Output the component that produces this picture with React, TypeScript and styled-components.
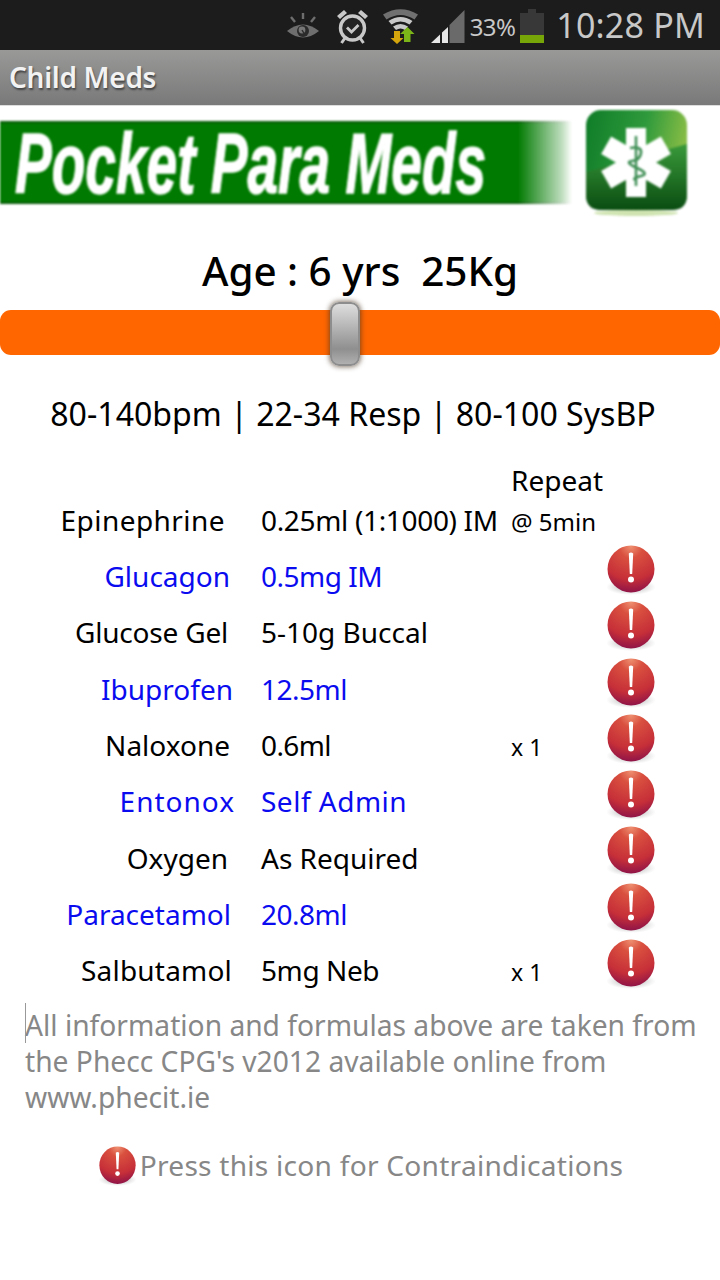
import React, { FC } from "react";
import styled, { createGlobalStyle } from "styled-components";

const GlobalStyle = createGlobalStyle`
  html, body {
    margin: 0;
    padding: 0;
    background: #fff;
  }
  body {
    font-family: "Noto Sans", "Open Sans", sans-serif;
  }
`;

const Screen = styled.div`
  width: 720px;
  height: 1280px;
  overflow: hidden;
  background: #fff;
  color: #000;
`;

const StatusBar = styled.div`
  height: 50px;
  background: #1c1c1c;
  display: flex;
  align-items: center;
  justify-content: flex-end;
  padding-right: 15px;
`;

const StatusIcon = styled.svg<{ $gap?: number }>`
  display: block;
  margin-top: 2px;
  margin-right: ${({ $gap }) => $gap ?? 0}px;
`;

const BatteryText = styled.span`
  font-size: 24px;
  color: #c8c8c8;
  letter-spacing: -0.6px;
  margin-top: 3px;
  margin-right: 5px;
`;

const Clock = styled.span`
  font-size: 34px;
  color: #c8c8c8;
  margin-left: 12px;
  letter-spacing: 0.2px;
`;

const TitleBar = styled.div`
  height: 56px;
  display: flex;
  align-items: center;
  padding: 0 0 2px 9px;
  background: linear-gradient(#999998, #797979);
  border-bottom: 1px solid #ddd;
  box-sizing: border-box;
`;

const Title = styled.h1`
  margin: 0;
  font-size: 28px;
  font-weight: 600;
  letter-spacing: -0.3px;
  color: #f2f2f2;
  text-shadow: 1px 2px 2px #444;
`;

const Banner = styled.div`
  height: 111px;
  display: flex;
  align-items: flex-start;
  filter: blur(0.8px);
`;

const BannerBar = styled.div`
  width: 572px;
  height: 83px;
  margin-top: 15px;
  display: flex;
  align-items: center;
  background: #007a00;
  border-top: 2px solid #0b5c0b;
  border-bottom: 2px solid #0b5c0b;
  box-sizing: border-box;
  mask-image: linear-gradient(90deg, #000 518px, rgba(0, 0, 0, 0.25) 562px, transparent 572px);
`;

const BannerText = styled.span`
  display: inline-block;
  font-family: "Liberation Sans", Arial, sans-serif;
  font-weight: 700;
  font-style: italic;
  font-size: 86px;
  line-height: 1;
  color: #fff;
  -webkit-text-stroke: 1.5px #fff;
  white-space: nowrap;
  margin-left: 15px;
  transform: scaleX(0.64);
  transform-origin: left center;
`;

const BannerLogo = styled.svg`
  display: block;
  margin-left: 14px;
  margin-top: 4px;
`;

const AgeHeading = styled.div`
  height: 93px;
  display: flex;
  align-items: center;
  justify-content: center;
  font-size: 40.4px;
  font-weight: 500;
  white-space: pre;
  padding-top: 13px;
  box-sizing: border-box;
`;

const SliderTrack = styled.div`
  position: relative;
  height: 45px;
  border-radius: 11px;
  background: #ff6600;
`;

const SliderThumb = styled.div<{ $left: number }>`
  position: absolute;
  left: ${({ $left }) => $left}px;
  top: -8px;
  width: 30px;
  height: 64px;
  box-sizing: border-box;
  border-radius: 9px;
  border: 2px solid #8d8d8d;
  background: linear-gradient(#dedede, #a9a9a9 50%, #8f8f8f 75%, #b0b0b0);
  box-shadow: 0 0 5px 1px rgba(70, 50, 30, 0.65);
`;

const Vitals = styled.div`
  height: 105px;
  display: flex;
  align-items: center;
  justify-content: center;
  font-size: 32.1px;
  white-space: nowrap;
  padding: 11px 14px 0 0;
  box-sizing: border-box;
`;

const MedTable = styled.div`
  display: flex;
  flex-direction: column;
`;

const HeaderRow = styled.div`
  height: 88px;
  padding-bottom: 9px;
  box-sizing: border-box;
  display: grid;
  grid-template-columns: 261px 250px 1fr;
  align-items: end;
  font-size: 28px;
`;

const MedRow = styled.div<{ $link?: boolean }>`
  height: 56.3px;
  display: grid;
  grid-template-columns: 261px 250px 96px 48px;
  align-items: center;
  font-size: 28px;
  color: ${({ $link }) => ($link ? "#0b0bf0" : "#000")};
`;

const MedName = styled.div<{ $inset: number; $track?: number }>`
  text-align: right;
  padding-right: ${({ $inset }) => $inset}px;
  letter-spacing: ${({ $track }) => $track ?? 0}px;
  white-space: nowrap;
`;

const Dose = styled.div<{ $track?: number }>`
  letter-spacing: ${({ $track }) => $track ?? 0}px;
  white-space: nowrap;
`;

const RepeatHead = styled.div`
  display: flex;
  flex-direction: column;
  line-height: 41px;
  margin-bottom: -3px;
`;

const RepeatUnit = styled.span`
  font-size: 24px;
`;

const RepeatCount = styled.div`
  font-size: 23px;
  margin-top: 3px;
  color: #000;
`;

const AlertSvg = styled.svg`
  display: block;
  align-self: start;
  margin-top: -3px;
`;

const Note = styled.p`
  position: relative;
  margin: 9px 0 0;
  padding: 0 0 0 25px;
  font-size: 28.2px;
  line-height: 36px;
  color: #878787;
  white-space: pre-line;
`;

const Caret = styled.span`
  position: absolute;
  left: 25px;
  top: -4px;
  width: 1px;
  height: 40px;
  background: #999;
`;

const Legend = styled.div`
  display: flex;
  align-items: center;
  justify-content: center;
  gap: 4px;
  margin-top: 28px;
  padding-left: 2px;
  font-size: 28.1px;
  letter-spacing: 0.25px;
  color: #878787;
`;

const LegendIcon = styled.svg`
  display: block;
  margin-top: 3px;
`;

const AlertGraphic: FC<{ id: string }> = ({ id }) => (
  <>
    <defs>
      <radialGradient id={id} cx="50%" cy="2%" r="100%">
        <stop offset="0" stopColor="#ee8f70" />
        <stop offset="0.25" stopColor="#d9503f" />
        <stop offset="0.7" stopColor="#c62f38" />
        <stop offset="1" stopColor="#8c1249" />
      </radialGradient>
      <radialGradient id={`${id}-s`}>
        <stop offset="0" stopColor="#888" stopOpacity="0.9" />
        <stop offset="1" stopColor="#bbb" stopOpacity="0" />
      </radialGradient>
    </defs>
    <ellipse cx="24" cy="42" rx="25" ry="8" fill={`url(#${id}-s)`} />
    <circle cx="24" cy="24" r="23.5" fill={`url(#${id})`} />
    <path d="M21.8 8.5q2.2-2 4.4 0l-1 20.5h-2.4z" fill="#fff" />
    <circle cx="24" cy="34.5" r="3" fill="#fff" />
  </>
);

const meds = [
  { name: "Glucagon", dose: "0.5mg IM", inset: 31, link: true, doseTrack: -0.5 },
  { name: "Glucose Gel", dose: "5-10g Buccal", inset: 33, nameTrack: -0.2 },
  { name: "Ibuprofen", dose: "12.5ml", inset: 28, link: true, doseTrack: -0.5 },
  { name: "Naloxone", dose: "0.6ml", inset: 31, repeat: "x 1", doseTrack: -0.6 },
  { name: "Entonox", dose: "Self Admin", inset: 26, link: true, nameTrack: 1, doseTrack: 0.5 },
  { name: "Oxygen", dose: "As Required", inset: 33 },
  { name: "Paracetamol", dose: "20.8ml", inset: 30, link: true, doseTrack: -0.5 },
  { name: "Salbutamol", dose: "5mg Neb", inset: 29, repeat: "x 1", nameTrack: 0.2, doseTrack: -0.4 },
];

const App: FC = () => (
  <Screen>
    <GlobalStyle />
    <StatusBar>
      <StatusIcon $gap={17} width="32" height="30" viewBox="0 0 32 30">
        <path d="M0 20q16-13 32 0q-16 13-32 0z" fill="#6e6e6e" />
        <circle cx="16" cy="20" r="6" fill="#2a2a2a" />
        <circle cx="15" cy="19" r="3.4" fill="#777" />
        <path d="M15 19l3 5" stroke="#2a2a2a" strokeWidth="1.4" />
        <path d="M4 6l4 5M16 2v6M28 6l-4 5" stroke="#6e6e6e" strokeWidth="2.4" />
      </StatusIcon>
      <StatusIcon $gap={14} width="33" height="35" viewBox="0 0 33 35">
        <circle cx="16.5" cy="19" r="12" fill="#232323" stroke="#c8c8c8" strokeWidth="3.4" />
        <path d="M11 18.5l4.5 4.5 7-7" fill="none" stroke="#c8c8c8" strokeWidth="2.8" />
        <path d="M1 7l7-6 3 3-7 6zM32 7l-7-6-3 3 7 6z" fill="#c8c8c8" />
        <path d="M9 29l-3.500 5M24 29l3.500 5" stroke="#c8c8c8" strokeWidth="3" />
      </StatusIcon>
      <StatusIcon $gap={13} width="35" height="35" viewBox="0 0 35 35">
        <path d="M0 5.500Q17.500-5 35 5.500l-3.500 5Q17.500 1.500 3.500 10.500z" fill="#707070" />
        <path d="M5.500 12Q17.500 4 29.500 12l-3 3.500q-9-6-18 0z" fill="#c8c8c8" />
        <path d="M10 17.500q7.500-5 15 0l-3 3.500q-4.500-3-9 0z" fill="#c8c8c8" />
        <path d="M11 22h6v7h3.500l-6.500 6-6.500-6H11z" fill="#d4a50c" />
        <path d="M21 33V25h-4l7.500-7 7 7h-4v8z" fill="#7cb518" />
      </StatusIcon>
      <StatusIcon $gap={5} width="34" height="33" viewBox="0 0 34 33">
        <path d="M0 33l9-8.500V33z" fill="#e6e6e6" />
        <path d="M11 22.500l6-5.500V33h-6z" fill="#e6e6e6" />
        <path d="M18.500 15L33.500 0v33h-15z" fill="#6a6a6a" />
      </StatusIcon>
      <BatteryText>33%</BatteryText>
      <StatusIcon width="24" height="34" viewBox="0 0 24 34">
        <path d="M8 0h8v4h8v30H0V4h8z" fill="#383838" />
        <path d="M0 26h24v8H0z" fill="#76a608" />
      </StatusIcon>
      <Clock>10:28 PM</Clock>
    </StatusBar>
    <TitleBar>
      <Title>Child Meds</Title>
    </TitleBar>
    <Banner>
      <BannerBar>
        <BannerText>Pocket Para Meds</BannerText>
      </BannerBar>
      <BannerLogo width="101" height="107" viewBox="0 0 101 107">
        <defs>
          <linearGradient id="tile" x1="0" y1="0" x2="1" y2="0.2">
            <stop offset="0" stopColor="#0f7c28" />
            <stop offset="0.6" stopColor="#2f9a3c" />
            <stop offset="1" stopColor="#86bc45" />
          </linearGradient>
          <linearGradient id="tileLow" x1="0" y1="0" x2="0" y2="1">
            <stop offset="0" stopColor="#3a9a3a" />
            <stop offset="1" stopColor="#0a4d12" />
          </linearGradient>
        </defs>
        <ellipse cx="50" cy="103" rx="42" ry="3" fill="#cfe3b0" />
        <rect x="0" y="0" width="101" height="100" rx="15" fill="url(#tile)" />
        <path d="M0 62L101 34v51q0 15-15 15H15Q0 100 0 85z" fill="url(#tileLow)" />
        <g fill="#fff">
          <rect x="40" y="18" width="20" height="69" />
          <rect x="40" y="18" width="20" height="69" transform="rotate(60 50 52.500)" />
          <rect x="40" y="18" width="20" height="69" transform="rotate(-60 50 52.500)" />
        </g>
        <path d="M50 26v50" stroke="#3f8f55" strokeWidth="2.500" />
        <path d="M44 38q12-2 11 5t-9 8 5 7 4 8-6 4" fill="none" stroke="#3f8f55" strokeWidth="2.600" />
      </BannerLogo>
    </Banner>
    <AgeHeading>{"Age : 6 yrs  25Kg"}</AgeHeading>
    <SliderTrack>
      <SliderThumb $left={330} />
    </SliderTrack>
    <Vitals>80-140bpm | 22-34 Resp | 80-100 SysBP</Vitals>
    <MedTable>
      <HeaderRow>
        <MedName $inset={36} $track={0.45}>Epinephrine</MedName>
        <Dose $track={-0.33}>0.25ml (1:1000) IM</Dose>
        <RepeatHead>
          Repeat
          <RepeatUnit>@ 5min</RepeatUnit>
        </RepeatHead>
      </HeaderRow>
      {meds.map((med) => (
        <MedRow key={med.name} $link={med.link}>
          <MedName $inset={med.inset} $track={med.nameTrack}>{med.name}</MedName>
          <Dose $track={med.doseTrack}>{med.dose}</Dose>
          <RepeatCount>{med.repeat}</RepeatCount>
          <AlertSvg width="48" height="50" viewBox="0 0 48 50">
            <AlertGraphic id={`alert-${med.name.replace(" ", "")}`} />
          </AlertSvg>
        </MedRow>
      ))}
    </MedTable>
    <Note>
      <Caret />
      {"All information and formulas above are taken from\nthe Phecc CPG's v2012 available online from\nwww.phecit.ie"}
    </Note>
    <Legend>
      <LegendIcon width="37" height="40" viewBox="0 0 48 50" preserveAspectRatio="none">
        <AlertGraphic id="alert-legend" />
      </LegendIcon>
      Press this icon for Contraindications
    </Legend>
  </Screen>
);

export default App;
